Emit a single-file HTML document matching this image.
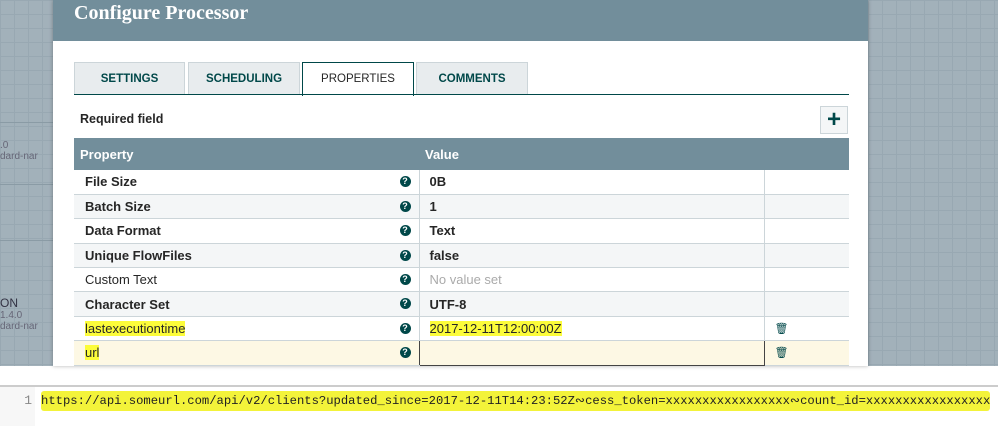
<!DOCTYPE html>
<html><head><style>
*{margin:0;padding:0;box-sizing:border-box}
body{width:998px;height:426px;overflow:hidden;position:relative;font-family:"Liberation Sans",sans-serif;background:#fff}
.bg{position:absolute;top:0;height:366px;background-color:#a2b1ba;background-image:linear-gradient(#98a8b2 1px,transparent 1px),linear-gradient(90deg,#98a8b2 1px,transparent 1px);background-size:14px 14px}
.dlg{position:absolute;left:53px;top:0;width:815px;height:366px;background:#fff;box-shadow:0 0 4px rgba(0,0,0,.3)}
.hdr{height:41px;background:#728e9b;color:#fff;font-family:"Liberation Serif",serif;font-weight:bold;font-size:20px;padding:2px 0 0 21px}
.tab{position:absolute;top:62px;height:33px;border:1px solid #ccd5d9;background:#e8ecee;color:#004849;font-size:11.5px;font-weight:bold;text-align:center;line-height:32px}
.tab.act{background:#fff;border:1px solid #004849;border-bottom:none;color:#262626;font-weight:normal;height:34px}
.ul{position:absolute;left:21px;top:94px;width:775px;height:1px;background:#004849}
table{position:absolute;left:21px;top:138px;width:775px;border-collapse:collapse;font-size:13px}
th{background:#728e9b;color:#fff;text-align:left;height:32px;padding-left:6px;font-size:13px}
td{height:24.4px;border-bottom:1px solid #ccd5d9;padding-left:11px;color:#262626;position:relative}
tr:nth-child(odd) td{background:#f4f6f7}
td.v{border-left:1px solid #ccd5d9;padding-left:10px;font-weight:bold}
td.a{border-left:1px solid #ccd5d9}
.b{font-weight:bold}
.q{position:absolute;right:8px;top:6px;width:11px;height:11px;border-radius:50%;background:#004849;color:#fff;font-size:9px;font-weight:bold;text-align:center;line-height:11px}
.hl{background:#fcfc3a}
</style></head><body>
<div class="bg" style="left:0;width:53px"></div>
<div class="bg" style="left:868px;width:130px"></div>
<div style="position:absolute;left:0;top:122px;width:53px;height:63px;border-top:1px solid #8a9ba5;border-bottom:1px solid #8a9ba5"></div>
<div style="position:absolute;left:0;top:140px;font-size:10px;color:#667">.0<br>dard-nar</div>
<div style="position:absolute;left:0;top:240px;width:53px;height:1px;background:#8a9ba5"></div>
<div style="position:absolute;left:0;top:298px;font-size:10px;color:#667;line-height:11px"><span style="font-size:12px;color:#334">ON</span><br>1.4.0<br>dard-nar</div>
<div class="dlg">
<div class="hdr">Configure Processor</div>
<div class="tab" style="left:21px;width:111px">SETTINGS</div>
<div class="tab" style="left:135px;width:112px">SCHEDULING</div>
<div class="tab act" style="left:249px;width:112px">PROPERTIES</div>
<div class="tab" style="left:363px;width:112px">COMMENTS</div>
<div class="ul"></div>
<div style="position:absolute;left:27px;top:112px;font-size:12.5px;font-weight:bold;color:#262626">Required field</div>
<div style="position:absolute;left:767px;top:106px;width:28px;height:28px;border:1px solid #ccd5d9;background:#f4f6f7;color:#004849;font-size:24px;font-weight:bold;text-align:center;line-height:26px">+</div>
<table>
<tr><th style="width:345px">Property</th><th style="padding-left:6px" colspan="2">Value</th></tr>
<tr><td class="b" style="background:#fff">File Size<span class="q">?</span></td><td class="v" style="background:#fff">0B</td><td class="a" style="width:85px;background:#fff"></td></tr>
<tr><td class="b">Batch Size<span class="q">?</span></td><td class="v">1</td><td class="a"></td></tr>
<tr><td class="b">Data Format<span class="q">?</span></td><td class="v">Text</td><td class="a"></td></tr>
<tr><td class="b">Unique FlowFiles<span class="q">?</span></td><td class="v">false</td><td class="a"></td></tr>
<tr><td>Custom Text<span class="q">?</span></td><td class="v" style="font-weight:normal;color:#aaa">No value set</td><td class="a"></td></tr>
<tr><td class="b">Character Set<span class="q">?</span></td><td class="v">UTF-8</td><td class="a"></td></tr>
<tr><td style="background:#fff"><span class="hl">lastexecutiontime</span><span class="q">?</span></td><td class="v" style="font-weight:normal;background:#fff"><span class="hl">2017-12-11T12:00:00Z</span></td><td class="a" style="background:#fff;color:#004849;padding-left:10px;font-size:11px">&#128465;</td></tr>
<tr><td style="background:#fdf8e4!important"><span class="hl">url</span><span class="q">?</span></td><td class="v" style="background:#fdf8e4!important;border:1px solid #444"></td><td class="a" style="background:#fdf8e4!important;color:#004849;padding-left:10px;font-size:11px">&#128465;</td></tr>
</table>
</div>
<div style="position:absolute;left:0;top:385px;width:998px;height:2px;background:#ccc"></div>
<div style="position:absolute;left:0;top:387px;width:35px;height:39px;background:#f7f7f7;color:#888;font-family:'Liberation Mono',monospace;font-size:13px;text-align:right;padding:6px 3px 0 0">1</div>
<div style="position:absolute;left:41px;top:391px;font-family:'Liberation Mono',monospace;font-size:12.2px;color:#222;background:#f3f33a;white-space:nowrap;padding:2px 0 3px;border-radius:3px">https://api.someurl.com/api/v2/clients?updated_since=2017-12-11T14:23:52Z∾cess_token=xxxxxxxxxxxxxxxxx∾count_id=xxxxxxxxxxxxxxxxx</div>
</body></html>
